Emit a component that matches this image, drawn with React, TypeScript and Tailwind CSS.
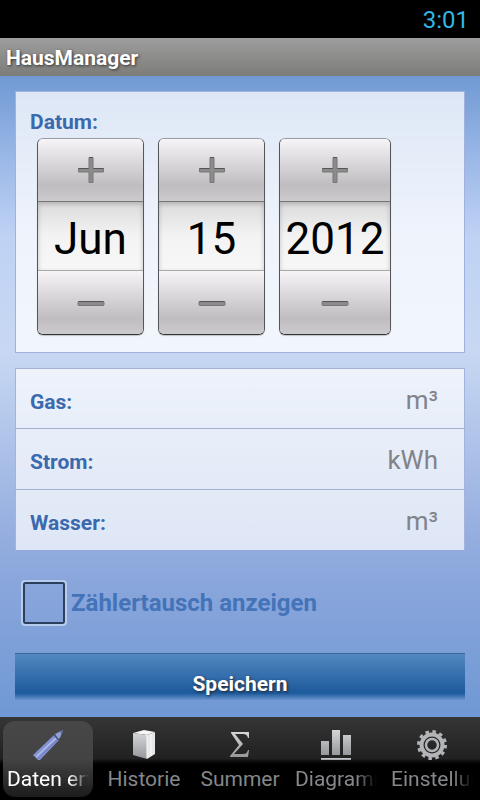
import { ReactNode, useState } from "react";

type SpinnerProps = {
  label: string;
  value: string;
  width: string;
};

const labelStyle = "text-[21px] leading-6 font-bold text-[#3a69ae]";

function Spinner({ label, value, width }: SpinnerProps) {
  const buttonStyle =
    "flex w-full items-center justify-center bg-linear-to-b from-[#f6f4f6] via-[#bfbdbf] via-75% to-[#cccacc]";
  return (
    <div
      className={`${width} flex flex-col overflow-hidden rounded-md border border-t-[#9a9ba3] border-x-[#55565a] border-b-[#333] shadow-[0_1px_1px_rgba(0,0,0,0.2)]`}
    >
      <button type="button" aria-label={`${label} plus`} className={`${buttonStyle} h-[62px]`}>
        <svg width="28" height="28" viewBox="0 0 28 28">
          <path
            d="M12 1.500h4V12.500h10.500v3.500H16v10.500h-4V16H1.500v-3.500H12z"
            fill="#8b8b8b"
            stroke="#777"
            strokeLinejoin="round"
          />
          <path d="M1.500 12.500h10M16.500 12.500h10M12 1.500h4" stroke="#555" />
        </svg>
      </button>
      <input
        type="text"
        aria-label={label}
        defaultValue={value}
        className="h-[70px] w-full border-t border-b border-t-[#77777a] border-b-[#aaa] bg-linear-to-b from-[#dcdbdc] via-[#f4f3f4] via-50% to-[#f8f7f8] pt-[5px] text-center text-[44px] text-black shadow-[inset_0_2px_5px_rgba(0,0,0,0.2)] outline-none"
      />
      <button type="button" aria-label={`${label} minus`} className={`${buttonStyle} h-[63px]`}>
        <svg width="28" height="28" viewBox="0 0 28 28">
          <rect x="1" y="12.500" width="26" height="4" rx="1" fill="#8b8b8b" stroke="#777" />
          <path d="M1.500 12.500h25" stroke="#555" />
        </svg>
      </button>
    </div>
  );
}

function MeterRow({ id, label, unit }: { id: string; label: string; unit: string }) {
  return (
    <div className="flex h-[61px] items-center border-t border-[#a3afd3] pl-[14px] pr-[26px] first:h-[60px]">
      <label htmlFor={id} className={`${labelStyle} pt-[6px]`}>
        {label}
      </label>
      <input
        id={id}
        type="text"
        placeholder={unit}
        className="min-w-0 flex-1 bg-transparent pt-[2px] text-right text-[26px] leading-8 text-gray-700 outline-none placeholder:text-[#828389]"
      />
    </div>
  );
}

function Tab({ label, active, children }: { label: string; active?: boolean; children: ReactNode }) {
  return (
    <button
      type="button"
      className={`mx-[3px] flex h-[76px] min-w-0 flex-1 flex-col items-center rounded-xl px-1 pt-2 ${
        active
          ? "bg-linear-to-b from-[#464746] via-[#424342] via-50% to-[#1c1c1c] text-white"
          : "text-[#85878a]"
      }`}
    >
      <svg width="32" height="32" viewBox="0 0 32 32" aria-hidden="true">
        {children}
      </svg>
      <span
        className={`mt-1 w-full overflow-hidden whitespace-nowrap text-[21px] leading-7 ${
          label.length > 8 ? "mask-r-from-75% text-left" : "text-center"
        }`}
      >
        {label}
      </span>
    </button>
  );
}

function TabBar() {
  return (
    <nav className="flex h-[83px] items-center bg-linear-to-b from-[#343534] via-[#202120] via-50% to-black to-60% font-[Roboto,sans-serif]">
      <svg width="0" height="0" className="absolute" aria-hidden="true">
        <defs>
          <linearGradient id="silver" x1="0" y1="0" x2="0" y2="1">
            <stop offset="0" stopColor="#d4d6d9" />
            <stop offset="1" stopColor="#95979b" />
          </linearGradient>
        </defs>
      </svg>
      <Tab label="Daten erfassen" active>
        <path d="M1 26 22 6l5 5L8 31H6z" fill="#8292d2" />
        <path d="m4 28 20-19" stroke="#b4bfec" strokeWidth="1.500" />
        <path d="m6 30 20-20" stroke="#6b7cc0" />
        <path d="m23 5 8-4-3 8-2 1z" fill="#929fd6" />
        <path d="m22 6 5 5" stroke="#4a5687" strokeWidth="1.500" />
        <path d="m28 3 3-2-1 4z" fill="#5868ad" />
      </Tab>
      <Tab label="Historie">
        <path d="m5 4 11-3 11 2-8 3z" fill="#f6f6f6" />
        <path d="m5 4 14 2v24L5 26z" fill="url(#silver)" />
        <path d="m19 6 8-3v22l-8 5z" fill="#e6e7e9" />
        <path d="M19 6v23M23 5v22" stroke="#fafafa" />
      </Tab>
      <Tab label="Summer">
        <path
          d="M7 3h18v6h-1c-1-3-2-4-5-4h-8l8 10-9 10h9c3 0 4-1 5-4h1l-1 7H6v-1l9-11L7 4z"
          fill="url(#silver)"
        />
      </Tab>
      <Tab label="Diagramme">
        <g fill="url(#silver)">
          <path d="M1 12h8v14H1zM12 1h8v25h-8zM23 6h8v20h-8z" />
          <path d="M1 29h30v2H1z" />
        </g>
      </Tab>
      <Tab label="Einstellungen">
        <g fill="none" stroke="#b2b4b7">
          <circle cx="16" cy="16" r="10.500" strokeWidth="4" />
          <circle cx="16" cy="16" r="13.500" strokeWidth="3" strokeDasharray="3.530 3.540" />
          <circle cx="16" cy="16" r="6" strokeWidth="2.500" />
        </g>
      </Tab>
    </nav>
  );
}

function App() {
  const [swap, setSwap] = useState(false);

  return (
    <div className="flex min-h-screen flex-col bg-black font-[Roboto,sans-serif]">
      <div className="flex h-[38px] items-center justify-end pt-[2px] pr-[11px] text-[24px] text-[#33b5e5]">
        <time>3:01</time>
      </div>
      <header className="flex h-[38px] items-center bg-linear-to-b from-[#9d9d9d] to-[#7c7c7a] px-[6px]">
        <h1 className="pt-[2px] text-[21px] leading-6 font-bold text-white [text-shadow:1px_1px_3px_#333]">
          HausManager
        </h1>
      </header>

      <main className="flex-1 bg-[linear-gradient(#7099d3,#98b6e6_12%,#bfd2f4_25%,#c8d8f3_43%,#b0c5ea_56%,#98b0e0_70%,#8ba7dc_78%,#6f98d4)] px-[15px] pt-[15px]">
        <form onSubmit={(e) => e.preventDefault()}>
          <fieldset className="h-[262px] border border-[#a0b2db] bg-white/75 pt-[18px]">
            <div className={`${labelStyle} pl-[14px]`}>Datum:</div>
            <div className="mt-1 flex gap-[14px] pl-[21px]">
              <Spinner label="Monat" value="Jun" width="w-[107px]" />
              <Spinner label="Tag" value="15" width="w-[107px]" />
              <Spinner label="Jahr" value="2012" width="w-[112px]" />
            </div>
          </fieldset>

          <div className="mt-[15px] border-x border-[#a3b3dc] bg-white/70">
            <MeterRow id="gas" label="Gas:" unit="m³" />
            <MeterRow id="strom" label="Strom:" unit="kWh" />
            <MeterRow id="wasser" label="Wasser:" unit="m³" />
          </div>

          <label className="mt-[30px] flex items-center gap-[4px] pl-[6px] text-[24px] leading-7 font-bold text-[#4373b8]">
            <input
              type="checkbox"
              checked={swap}
              onChange={(e) => setSwap(e.target.checked)}
              className="size-[46px] appearance-none rounded-sm border-2 border-[#b6cbee] bg-transparent shadow-[inset_0_0_0_2px_#2c3f5c] checked:bg-[#3768b0]"
            />
            Zählertausch anzeigen
          </label>

          <button
            type="submit"
            className="mt-[27px] mb-[17px] h-[47px] w-full border-t border-[#3d6798] bg-linear-to-b from-[#5288c0] via-[#1c5a9c] via-85% to-[#1c5a9c]/10 pt-[14px] text-[21px] leading-6 font-bold text-white [text-shadow:1px_1px_3px_#222]"
          >
            Speichern
          </button>
        </form>
      </main>

      <TabBar />
    </div>
  );
}

export default App;
